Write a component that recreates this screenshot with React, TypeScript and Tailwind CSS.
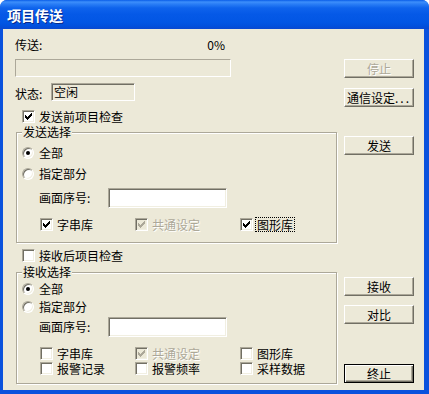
import React from "react";

const CHECK_PIXELS: [number, number, number][] = [
  [6, 0, 1],
  [5, 1, 2],
  [0, 2, 1],
  [4, 2, 3],
  [0, 3, 2],
  [3, 3, 3],
  [0, 4, 5],
  [1, 5, 3],
  [2, 6, 1],
];

function Check({ checked = false, disabled = false }: { checked?: boolean; disabled?: boolean }) {
  return (
    <span
      className={`inline-flex h-[13px] w-[13px] shrink-0 items-center justify-center border border-t-[#aca899] border-l-[#aca899] border-b-white border-r-white shadow-[inset_1px_1px_#716f64,inset_-1px_-1px_#f1efe2] ${
        disabled ? "bg-[#ece9d8]" : "bg-white"
      }`}
    >
      {checked && (
        <svg width="7" height="7" viewBox="0 0 7 7" shapeRendering="crispEdges">
          {CHECK_PIXELS.map(([x, y, w], i) => (
            <rect key={i} x={x} y={y} width={w} height={1} fill={disabled ? "#aca899" : "#000"} />
          ))}
        </svg>
      )}
    </span>
  );
}

function Radio({ checked = false }: { checked?: boolean }) {
  return (
    <span className="inline-flex h-[12px] w-[12px] shrink-0 items-center justify-center rounded-full border border-t-[#aca899] border-l-[#aca899] border-b-white border-r-white bg-white shadow-[inset_1px_1px_#716f64,inset_-1px_-1px_#f1efe2]">
      {checked && <span className="h-[4px] w-[4px] rounded-full bg-black" />}
    </span>
  );
}

function Btn({
  children,
  disabled = false,
  def = false,
  className = "",
}: {
  children: React.ReactNode;
  disabled?: boolean;
  def?: boolean;
  className?: string;
}) {
  const frame = def
    ? "border border-black shadow-[inset_1px_1px_white,inset_-1px_-1px_#716f64,inset_-2px_-2px_#aca899]"
    : "border border-t-white border-l-white border-r-[#716f64] border-b-[#716f64] shadow-[inset_-1px_-1px_#aca899]";
  const txt = disabled ? "text-[#aca899] [text-shadow:1px_1px_0_white]" : "text-black";
  return (
    <div
      className={`flex h-[19px] w-[70px] items-center justify-center bg-[#ece9d8] text-[12px] leading-[14px] ${frame} ${txt} ${className}`}
    >
      {children}
    </div>
  );
}

function CheckItem({
  label,
  checked = false,
  disabled = false,
  focus = false,
  className = "",
}: {
  label: string;
  checked?: boolean;
  disabled?: boolean;
  focus?: boolean;
  className?: string;
}) {
  return (
    <div className={`flex h-[13px] items-center ${className}`}>
      <Check checked={checked} disabled={disabled} />
      <span
        className={`ml-[3px] whitespace-nowrap px-[1px] leading-[13px] ${
          disabled ? "text-[#aca899] [text-shadow:1px_1px_0_white]" : "text-black"
        } ${focus ? "outline outline-1 outline-dotted outline-black" : ""}`}
      >
        {label}
      </span>
    </div>
  );
}

function RadioItem({ label, checked = false, className = "" }: { label: string; checked?: boolean; className?: string }) {
  return (
    <div className={`flex h-[13px] items-center ${className}`}>
      <Radio checked={checked} />
      <span className="ml-[5px] leading-[13px]">{label}</span>
    </div>
  );
}

function TextBox({ className = "" }: { className?: string }) {
  return (
    <div
      className={`h-[20px] w-[119px] border border-t-[#aca899] border-l-[#aca899] border-b-white border-r-white bg-white shadow-[inset_1px_1px_#716f64,inset_-1px_-1px_#f1efe2] ${className}`}
    />
  );
}

function Group({
  title,
  heightClass,
  marginClass,
  children,
}: {
  title: string;
  heightClass: string;
  marginClass: string;
  children: React.ReactNode;
}) {
  return (
    <div
      className={`relative ml-[1px] w-[321px] border border-[#aca899] shadow-[inset_1px_1px_white,1px_1px_white] ${heightClass} ${marginClass}`}
    >
      <span className="absolute left-[5px] top-[-8px] bg-[#ece9d8] px-[1px] leading-[14px]">{title}</span>
      {children}
    </div>
  );
}

export default function App() {
  return (
    <div className="flex h-[394px] w-[429px] flex-col overflow-hidden rounded-t-[7px] bg-[#0a52dd] font-['Noto_Sans_CJK_SC',sans-serif] text-[12px] text-black">
      {/* Title bar */}
      <div className="flex h-[29px] shrink-0 items-center bg-[linear-gradient(180deg,#0a5de8_0px,#3d8ffb_2px,#2a7ef6_4px,#0e63ec_8px,#0559e7_14px,#0256e4_22px,#0150dd_26px,#0a48cf_29px)] pl-[7px]">
        <span className="text-[14px] font-bold leading-[16px] text-white [text-shadow:1px_1px_0_#0a2a8a]">项目传送</span>
      </div>

      {/* Body */}
      <div className="mb-[4px] ml-[3px] mr-[5px] flex flex-1 bg-[#ece9d8] pl-[12px]">
        {/* Left column */}
        <div className="flex w-[322px] flex-col">
          <div className="mt-[9px] flex h-[14px] w-[215px] items-center justify-between pr-[5px] leading-[14px]">
            <span>传送:</span>
            <span>0%</span>
          </div>
          <div className="mt-[7px] h-[18px] w-[216px] border border-t-[#aca899] border-l-[#aca899] border-b-white border-r-white" />
          <div className="mt-[6px] flex h-[18px]">
            <span className="mt-[4px] w-[36px] leading-[14px]">状态:</span>
            <div className="flex h-[18px] w-[84px] items-start border border-t-[#aca899] border-l-[#aca899] border-b-white border-r-white pl-[2px] pt-[1px] leading-[14px] shadow-[inset_1px_1px_#716f64]">
              空闲
            </div>
          </div>
          <CheckItem label="发送前项目检查" checked className="ml-[7px] mt-[9px]" />

          <Group title="发送选择" heightClass="h-[111px]" marginClass="mt-[9px]">
            <div className="flex flex-col pl-[5px]">
              <RadioItem label="全部" checked className="mt-[13px]" />
              <RadioItem label="指定部分" className="mt-[8px]" />
              <div className="mt-[8px] flex h-[20px] items-center">
                <span className="ml-[17px] w-[69px] leading-[14px]">画面序号:</span>
                <TextBox />
              </div>
              <div className="ml-[18px] mt-[10px] flex">
                <CheckItem label="字串库" checked className="w-[95px]" />
                <CheckItem label="共通设定" checked disabled className="w-[105px]" />
                <CheckItem label="图形库" checked focus />
              </div>
            </div>
          </Group>

          <CheckItem label="接收后项目检查" className="ml-[7px] mt-[6px]" />

          <Group title="接收选择" heightClass="h-[112px]" marginClass="mt-[10px]">
            <div className="flex flex-col pl-[5px]">
              <RadioItem label="全部" checked className="mt-[9px]" />
              <RadioItem label="指定部分" className="mt-[5px]" />
              <div className="mt-[4px] flex h-[20px] items-center">
                <span className="ml-[17px] w-[69px] leading-[14px]">画面序号:</span>
                <TextBox />
              </div>
              <div className="ml-[18px] mt-[10px] flex">
                <CheckItem label="字串库" className="w-[95px]" />
                <CheckItem label="共通设定" checked disabled className="w-[105px]" />
                <CheckItem label="图形库" />
              </div>
              <div className="ml-[18px] mt-[2px] flex">
                <CheckItem label="报警记录" className="w-[95px]" />
                <CheckItem label="报警频率" className="w-[105px]" />
                <CheckItem label="采样数据" />
              </div>
            </div>
          </Group>
        </div>

        {/* Right column */}
        <div className="ml-[7px] flex w-[70px] flex-col">
          <Btn disabled className="mt-[30px]">停止</Btn>
          <Btn className="mt-[10px]">
            <span>通信设定</span>
            <span className="tracking-[2px]">...</span>
          </Btn>
          <Btn className="mt-[29px]">发送</Btn>
          <Btn className="mt-[122px]">接收</Btn>
          <Btn className="mt-[9px]">对比</Btn>
          <Btn def className="mt-[40px]">终止</Btn>
        </div>
      </div>
    </div>
  );
}
